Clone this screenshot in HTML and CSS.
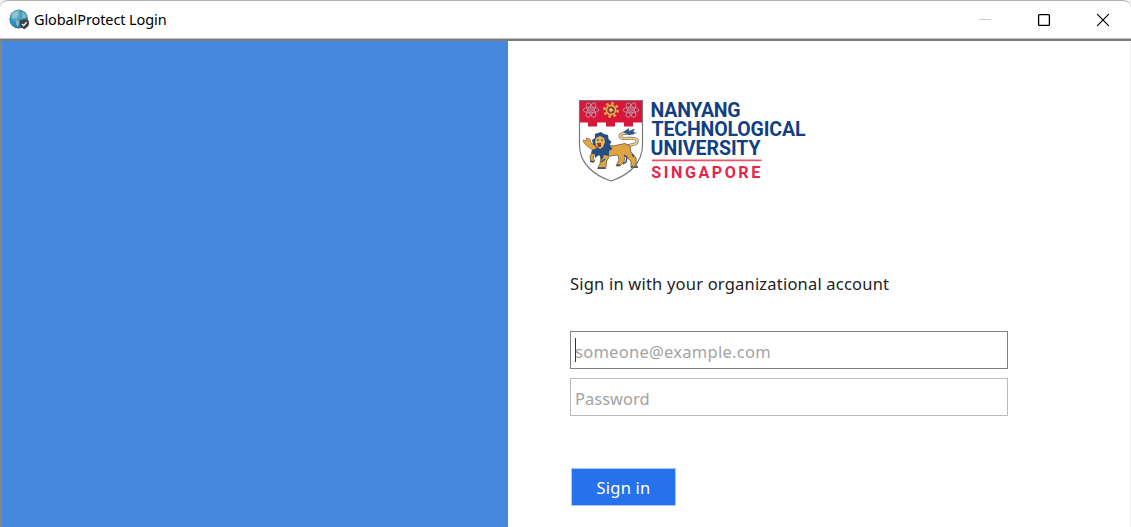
FILE: index.html
```html
<!DOCTYPE html>
<html lang="en">
<head>
<meta charset="utf-8">
<title>GlobalProtect Login</title>
<link rel="stylesheet" href="styles.css">
</head>
<body>
<div class="window">
  <header class="titlebar">
    <svg class="app-icon" width="21" height="21" viewBox="0 0 21 21">
      <defs><radialGradient id="globe" cx=".35" cy=".3" r=".75"><stop offset="0" stop-color="#67b9dc"/><stop offset=".65" stop-color="#3287b8"/><stop offset="1" stop-color="#226b98"/></radialGradient></defs>
      <circle cx="9.7" cy="10" r="9.4" fill="url(#globe)"/>
      <path d="M3 4.5 6 2.3 9.8 1.7 9 4 10.5 5.2 8.2 7.2 7.7 9.5 5.5 9 4.2 10.5 2.6 8z M7 11.3 10.2 12 10.5 14.5 8.3 18 7 15z M12.7 2.2 16.6 4.8 17.8 8 15 10 12.7 8.2 13.6 5.5z" fill="#a7d3b2" opacity=".65"/>
      <path d="M15.2 10.1Q17.2 11.4 19.9 11.5V14.8Q19.7 18.3 15.2 20.2 10.7 18.3 10.6 14.8V11.5Q13.2 11.4 15.2 10.1Z" fill="#3d4147"/>
      <path d="M12.9 14.9 14.6 16.6 17.6 13.2" fill="none" stroke="#fff" stroke-width="1.3"/>
    </svg>
    <h1 class="title">GlobalProtect Login</h1>
    <div class="controls">
      <svg width="14" height="14" viewBox="0 0 14 14"><path d="M1 6.5H13" stroke="#c9c9c9"/></svg>
      <svg width="14" height="14" viewBox="0 0 14 14"><rect x="1.6" y="1.6" width="10.8" height="10.8" rx="1" fill="none" stroke="#000" stroke-width="1.3"/></svg>
      <svg width="14" height="14" viewBox="0 0 14 14"><path d="M1.2 1.2 12.8 12.8M12.8 1.2 1.2 12.8" stroke="#000" stroke-width="1.2"/></svg>
    </div>
  </header>
  <main class="content">
    <aside class="banner"></aside>
    <section class="login">
      <svg class="logo" width="250" height="100" viewBox="0 0 250 100">
        <path d="M9.5 10.5H72.5V55C72.5 73 59 85 41 91 23 85 9.5 73 9.5 55Z" fill="#fff"/>
        <path d="M9.5 10.5H72.5V32.5H63V36.5H54V32.5H45V36.5H36V32.5H27V36.5H18V32.5H9.5Z" fill="#d8163a"/>
        <g fill="none" stroke="#b8929f" stroke-width="1">
          <g id="atom"><ellipse cx="21" cy="20" rx="8" ry="2.8"/><ellipse cx="21" cy="20" rx="8" ry="2.8" transform="rotate(60 21 20)"/><ellipse cx="21" cy="20" rx="8" ry="2.8" transform="rotate(120 21 20)"/><circle cx="21" cy="20" r="1.4"/></g>
          <use href="#atom" x="40"/>
        </g>
        <circle cx="41" cy="20" r="6.7" fill="none" stroke="#e3b04c" stroke-width="2.4" stroke-dasharray="2.6 2.66"/>
        <circle cx="41" cy="20" r="4.6" fill="#8d4632" stroke="#e8b450" stroke-width="1.6"/>
        <circle cx="41" cy="20" r="1.8" fill="#f2cf79"/>
        <path d="M53 59C57 53 68 57 67 50 65 46 50 51 50 46 51 42 58 43 64 43" fill="none" stroke="#7c6c50" stroke-width="3"/>
        <path d="M53 59C57 53 68 57 67 50 65 46 50 51 50 46 51 42 58 43 64 43" fill="none" stroke="#eed19b" stroke-width="1.7"/>
        <path d="M53 42 59 38 58.8 41 65 38.5 63 42 67 43 59 45Z" fill="#28598c"/>
        <path d="M34 54 43 56 55 53.5 60 56 61 62 66 68 66.5 75 68 77.5 61 77.5 61 71 55 66 54 72 50 76 46 76 49 70 48 65 40 66 37 70 36 76 36 78.5 27.5 78.5 30 74 31 65 25 63 23 68 25 71 21 72 20 66 24 61Z" fill="#dfa443" stroke="#6b5940" stroke-width=".8"/>
        <path d="M28 43 31 42 34 44 38 45 38.5 49 41.5 52 39.5 55 42.5 59 39 61 39 66 34 65 32 70 29 65 25 68 25 64 21 64 22 59 19 56 23 54 22 50 25 48 25 44Z" fill="#254f82"/>
        <path d="M23 60 18 57 14 53 13 50 17 51 16 48 20 49 21 53 24 55 27 58Z" fill="#e4a747" stroke="#7c5a36" stroke-width=".6"/>
        <path d="M26 48 30 46 34 48 35 52 33 57 30 59 26 56 25 52Z" fill="#e9b65b"/>
        <path d="M27 53 31 53 31 57 28 57Z" fill="#963a31"/>
        <path d="M27 50H29M31 50H33" stroke="#27476d"/>
        <path d="M54 65 57 67 56 72 53 74M62 64 64 67M35 69 31 72M47 75 50 75M28 78H35M61 77H67M20 71 24 72" fill="none" stroke="#284f7c" stroke-width="1.4"/>
        <path d="M9.5 10.5H72.5V55C72.5 73 59 85 41 91 23 85 9.5 73 9.5 55Z" fill="none" stroke="#77777b" stroke-width="1.2"/>
        <g class="logo-name">
          <text x="80.6" y="27.3" textLength="90">NANYANG</text>
          <text x="81.5" y="46" textLength="154">TECHNOLOGICAL</text>
          <text x="80.6" y="64.5" textLength="110">UNIVERSITY</text>
        </g>
        <path d="M82 70.3H191.5" stroke="#ec5068" stroke-width="1.8"/>
        <text class="logo-country" x="81.3" y="87.7" textLength="111.5" lengthAdjust="spacingAndGlyphs">SINGAPORE</text>
      </svg>
      <form class="form">
        <p class="prompt">Sign in with your organizational account</p>
        <div class="field field-active"><i class="caret"></i><span class="email-hint">someone@example.com</span></div>
        <div class="field"><span class="password-hint">Password</span></div>
        <button class="submit" type="button">Sign in</button>
      </form>
    </section>
  </main>
</div>
</body>
</html>
```
FILE: styles.css
```css
* { box-sizing: border-box; }
body { margin: 0; background: #f3f3f3; font-family: "Noto Sans", "Open Sans", sans-serif; }
.window { height: 527px; display: flex; flex-direction: column; overflow: hidden; background: #fff; border-top: 1px solid #b2b2b2; border-radius: 8px 8px 0 0; }
.titlebar { height: 40px; flex: none; display: flex; align-items: center; padding: 0 21px 1px 9px; border-bottom: 2px solid #7c7c7c; box-shadow: inset 0 -1px #bebebe; }
.app-icon { flex: none; margin-top: -1px; }
.title { margin: -2px 0 0 4px; font-size: 14.5px; font-weight: 400; line-height: 20px; letter-spacing: -.1px; color: #000; white-space: nowrap; }
.controls { margin-left: auto; display: flex; gap: 45px; }
.content { flex: 1; display: flex; border-left: 2px solid #858585; border-right: 1px solid #ededed; }
.banner { width: 506px; flex: none; background: #4588de; }
.login { flex: 1; padding: 49px 0 0 62px; }
.logo { display: block; }
.logo-name { font: 700 19.5px Roboto, sans-serif; fill: #123f83; }
.logo-country { font: 700 16px Roboto, sans-serif; letter-spacing: 2.5px; fill: #e5254a; }
.form { margin-top: 82px; display: flex; flex-direction: column; align-items: flex-start; }
.prompt { margin: 0 0 35px; font-size: 16.5px; line-height: 24px; letter-spacing: .2px; color: #222; white-space: nowrap; }
.field { width: 438px; height: 38px; margin-bottom: 10px; padding: 3px 0 0 4px; display: flex; align-items: center; border: 1px solid #bababa; color: #a3a3a3; font-size: 16.5px; }
.field-active { border-color: #808080; margin-bottom: 9px; }
.email-hint { letter-spacing: .27px; }
.caret { width: 1px; height: 24px; margin-right: -1px; margin-top: -4px; background: #333; }
.submit { width: 105px; height: 38px; margin: 42px 0 0 1px; padding: 0; border: 1px solid #a9c9fa; background: #2672ec; color: #fff; font: 16.5px "Noto Sans", sans-serif; letter-spacing: .2px; }
```
